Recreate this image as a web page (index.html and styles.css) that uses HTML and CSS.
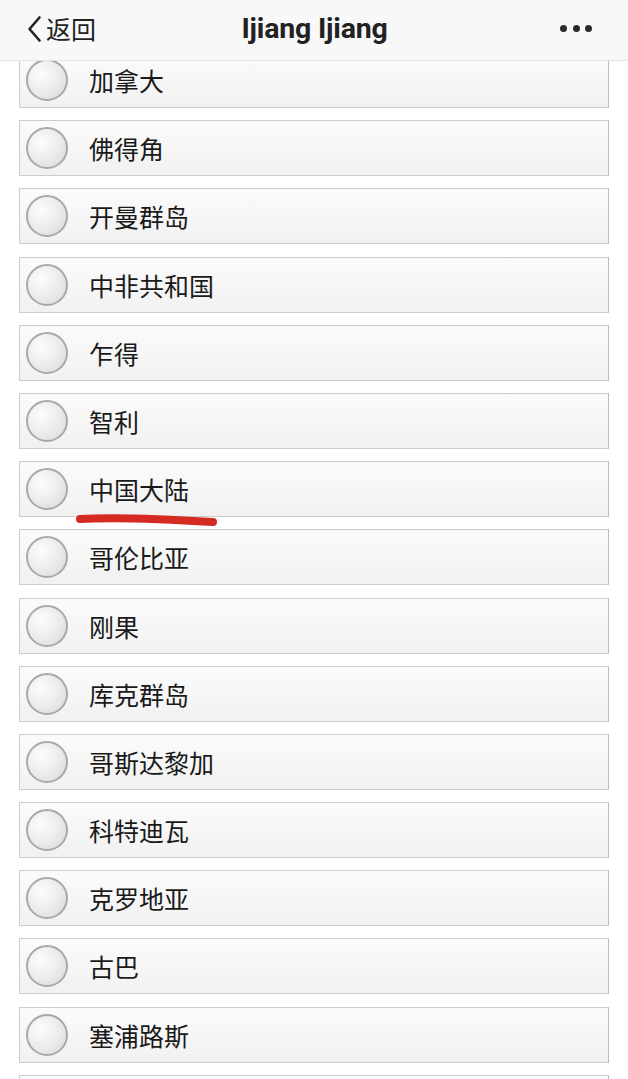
FILE: index.html
```html
<!DOCTYPE html>
<html lang="zh-CN">
<head>
<meta charset="utf-8">
<title>Ijiang Ijiang</title>
<link rel="stylesheet" href="styles.css">
</head>
<body>
<header class="nav">
  <div class="back">
    <svg class="chev" width="15" height="28" viewBox="0 0 15 28"><path d="M12.5 2.5 L2.5 14 L12.5 25.5" fill="none" stroke="#222" stroke-width="2.6" stroke-linecap="round" stroke-linejoin="round"/></svg>
    <span>返回</span>
  </div>
  <div class="title">Ijiang Ijiang</div>
  <div class="more"><i></i><i></i><i></i></div>
</header>
<ul class="list">
  <li class="row"><span class="radio"></span><span class="label">加拿大</span></li>
  <li class="row"><span class="radio"></span><span class="label">佛得角</span></li>
  <li class="row"><span class="radio"></span><span class="label">开曼群岛</span></li>
  <li class="row"><span class="radio"></span><span class="label">中非共和国</span></li>
  <li class="row"><span class="radio"></span><span class="label">乍得</span></li>
  <li class="row"><span class="radio"></span><span class="label">智利</span></li>
  <li class="row marked"><span class="radio"></span><span class="label">中国大陆</span>
    <svg class="mark" width="144" height="16" viewBox="0 0 144 16"><path d="M5 7 C 40 5, 90 7, 138 10" fill="none" stroke="#d42a22" stroke-width="8" stroke-linecap="round"/></svg>
  </li>
  <li class="row"><span class="radio"></span><span class="label">哥伦比亚</span></li>
  <li class="row"><span class="radio"></span><span class="label">刚果</span></li>
  <li class="row"><span class="radio"></span><span class="label">库克群岛</span></li>
  <li class="row"><span class="radio"></span><span class="label">哥斯达黎加</span></li>
  <li class="row"><span class="radio"></span><span class="label">科特迪瓦</span></li>
  <li class="row"><span class="radio"></span><span class="label">克罗地亚</span></li>
  <li class="row"><span class="radio"></span><span class="label">古巴</span></li>
  <li class="row"><span class="radio"></span><span class="label">塞浦路斯</span></li>
  <li class="row"></li>
</ul>
</body>
</html>
```
FILE: styles.css
```css
* { box-sizing: border-box; }
html, body {
  margin: 0;
  padding: 0;
  background: #ffffff;
  font-family: "Noto Sans CJK SC", "Noto Sans", sans-serif;
  color: #1c1c1c;
  overflow: hidden;
}
.nav {
  position: absolute;
  top: 0;
  left: 0;
  right: 0;
  height: 61px;
  background: #f8f8f8;
  border-bottom: 1px solid #e4e4e4;
  display: flex;
  align-items: center;
  justify-content: space-between;
  padding: 0 36px 3px 27px;
  z-index: 2;
}
.back {
  display: flex;
  align-items: center;
  gap: 4px;
  font-size: 25px;
  color: #222;
  width: 120px;
}
.back span { line-height: 1; }
.title {
  font-family: Roboto, "Liberation Sans", sans-serif;
  font-weight: 700;
  font-size: 28.5px;
  color: #222;
  letter-spacing: -0.2px;
  margin-left: 10px;
}
.more {
  width: 120px;
  display: flex;
  justify-content: flex-end;
  gap: 5.5px;
}
.more i {
  display: block;
  width: 7px;
  height: 7px;
  border-radius: 50%;
  background: #2a2a2a;
}
.list {
  list-style: none;
  margin: 0;
  padding: 52px 19px 0 19px;
}
.row {
  position: relative;
  height: 56px;
  margin-bottom: 12.2px;
  display: flex;
  align-items: center;
  padding-left: 6px;
  gap: 21px;
  border: 1px solid #cdcdcd;
  border-right-color: #bdbdbd;
  background: linear-gradient(#fbfbfb, #f1f1f1);
}
.radio {
  width: 42px;
  height: 42px;
  border-radius: 50%;
  border: 2px solid #a9a9a9;
  background: radial-gradient(circle at 35% 35%, #fdfdfd 0%, #eaeaea 55%, #d6d6d6 100%);
  flex: none;
}
.label {
  font-size: 25px;
  line-height: 1;
  color: #1a1a1a;
  padding-top: 1px;
}
.mark {
  position: absolute;
  left: 55px;
  top: 50px;
}
```
